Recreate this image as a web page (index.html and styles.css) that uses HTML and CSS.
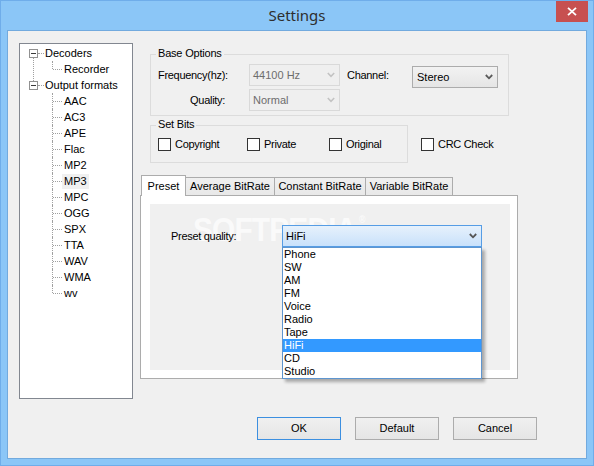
FILE: index.html
```html
<!DOCTYPE html>
<html>
<head>
<meta charset="utf-8">
<title>Settings</title>
<link rel="stylesheet" href="styles.css">
</head>
<body>
<div class="window">
  <div class="titlebar">
    <span class="title">Settings</span>
    <div class="close"><svg width="10" height="9" viewBox="0 0 10 9"><path d="M1 0.8 L9 8.2 M9 0.8 L1 8.2" stroke="#fff" stroke-width="1.8" fill="none"/></svg></div>
  </div>
  <div class="client">
    <div class="main">
      <div class="tree">
        <div class="node first">
          <div class="row top"><span class="exp"></span><span class="dots"></span><span class="lab">Decoders</span></div>
          <div class="row kid last"><span class="lab">Recorder</span></div>
        </div>
        <div class="node">
          <div class="row top"><span class="exp"></span><span class="dots"></span><span class="lab">Output formats</span></div>
          <div class="row kid"><span class="lab">AAC</span></div>
          <div class="row kid"><span class="lab">AC3</span></div>
          <div class="row kid"><span class="lab">APE</span></div>
          <div class="row kid"><span class="lab">Flac</span></div>
          <div class="row kid"><span class="lab">MP2</span></div>
          <div class="row kid"><span class="lab sel">MP3</span></div>
          <div class="row kid"><span class="lab">MPC</span></div>
          <div class="row kid"><span class="lab">OGG</span></div>
          <div class="row kid"><span class="lab">SPX</span></div>
          <div class="row kid"><span class="lab">TTA</span></div>
          <div class="row kid"><span class="lab">WAV</span></div>
          <div class="row kid"><span class="lab">WMA</span></div>
          <div class="row kid last"><span class="lab">wv</span></div>
        </div>
      </div>
      <div class="right">
        <div class="group base">
          <span class="legend">Base Options</span>
          <div class="frow">
            <span class="lbl w91">Frequency(hz):</span>
            <div class="combo dis w91c"><span class="ctext">44100 Hz</span><svg class="arrow" width="8" height="6" viewBox="0 0 8 6"><path d="M0.8 1 L4 4.3 L7.2 1" stroke="#c3c3c3" stroke-width="1.6" fill="none"/></svg></div>
            <span class="lbl chan">Channel:</span>
            <div class="combo norm stereo"><span class="ctext">Stereo</span><svg class="arrow" width="8" height="6" viewBox="0 0 8 6"><path d="M0.8 1 L4 4.3 L7.2 1" stroke="#5a5a5a" stroke-width="1.8" fill="none"/></svg></div>
          </div>
          <div class="frow second">
            <span class="lbl w91 ralign">Quality:</span>
            <div class="combo dis w91c"><span class="ctext">Normal</span><svg class="arrow" width="8" height="6" viewBox="0 0 8 6"><path d="M0.8 1 L4 4.3 L7.2 1" stroke="#c3c3c3" stroke-width="1.6" fill="none"/></svg></div>
          </div>
        </div>
        <div class="bitsrow">
          <div class="group bits">
            <span class="legend">Set Bits</span>
            <label class="chk w89"><span class="box"></span>Copyright</label>
            <label class="chk w82"><span class="box"></span>Private</label>
            <label class="chk"><span class="box"></span>Original</label>
          </div>
          <label class="chk crc"><span class="box"></span>CRC Check</label>
        </div>
        <div class="tabs">
          <div class="tab active t1">Preset</div>
          <div class="tab t2">Average BitRate</div>
          <div class="tab t3">Constant BitRate</div>
          <div class="tab t4">Variable BitRate</div>
        </div>
        <div class="panel">
          <div class="pinner">
            <div class="watermark">SOFTPEDIA<sup>®</sup></div>
            <span class="lbl plabel">Preset quality:</span>
            <div class="combo focus">
              <span class="ctext">HiFi</span>
              <svg class="arrow" width="8" height="6" viewBox="0 0 8 6"><path d="M0.8 1 L4 4.3 L7.2 1" stroke="#555" stroke-width="1.8" fill="none"/></svg>
              <div class="list">
                <div class="item">Phone</div>
                <div class="item">SW</div>
                <div class="item">AM</div>
                <div class="item">FM</div>
                <div class="item">Voice</div>
                <div class="item">Radio</div>
                <div class="item">Tape</div>
                <div class="item hl">HiFi</div>
                <div class="item">CD</div>
                <div class="item">Studio</div>
              </div>
            </div>
          </div>
        </div>
      </div>
    </div>
    <div class="buttons">
      <div class="btn def">OK</div>
      <div class="btn">Default</div>
      <div class="btn">Cancel</div>
    </div>
  </div>
</div>
</body>
</html>
```
FILE: styles.css
```css
* { box-sizing: border-box; }
html, body { margin: 0; padding: 0; }
body {
  width: 594px;
  height: 466px;
  overflow: hidden;
  font-family: "Liberation Sans", Arial, sans-serif;
  font-size: 11px;
  color: #000;
}
.window {
  width: 594px;
  height: 466px;
  background: #8bc6f7;
  box-shadow: inset 0 0 0 1px #6fadea;
}
.titlebar {
  height: 30px;
  position: relative;
  text-align: center;
}
.title {
  font-family: "Noto Sans", "Open Sans", sans-serif;
  font-size: 15px;
  color: #2e2e2e;
  line-height: 31px;
}
.close {
  position: absolute;
  top: 1px;
  right: 6px;
  width: 32px;
  height: 21px;
  background: #c75050;
  display: flex;
  align-items: center;
  justify-content: center;
}
.client {
  margin: 0 7px;
  height: 429px;
  background: #f0f0f0;
  border: 1px solid #72aade;
}
.main {
  display: flex;
  padding: 12px 0 0 11px;
}
/* tree */
.tree {
  width: 114px;
  height: 356px;
  border: 1px solid #828790;
  background: #fff;
  padding-top: 1px;
}
.node { position: relative; }
.node.first::before {
  content: "";
  position: absolute;
  left: 13px;
  top: 13px;
  bottom: -4px;
  border-left: 1px dotted #a0a0a0;
}
.row {
  height: 16px;
  line-height: 16px;
  white-space: nowrap;
}
.row.top {
  display: flex;
  align-items: center;
  padding-left: 9px;
}
.exp {
  width: 9px;
  height: 9px;
  border: 1px solid #919191;
  background: #fff;
  position: relative;
  flex: none;
}
.exp::after {
  content: "";
  position: absolute;
  left: 1px;
  top: 3px;
  width: 5px;
  height: 1px;
  background: #3a3a3a;
}
.dots {
  width: 6px;
  border-top: 1px dotted #a0a0a0;
  margin-right: 1px;
  flex: none;
}
.row.kid {
  position: relative;
  padding-left: 44px;
}
.row.kid::before {
  content: "";
  position: absolute;
  left: 32px;
  top: 0;
  bottom: 0;
  border-left: 1px dotted #a0a0a0;
}
.row.kid.last::before { bottom: 8px; }
.row.kid::after {
  content: "";
  position: absolute;
  left: 33px;
  top: 8px;
  width: 9px;
  border-top: 1px dotted #a0a0a0;
}
.lab { display: inline-block; }
.sel {
  background: #f0f0f0;
  margin-left: -2px;
  padding: 0 2px;
  line-height: 15px;
}
/* right column */
.right {
  margin-left: 7px;
  padding-top: 11px;
  display: flex;
  flex-direction: column;
  align-items: flex-start;
}
.group {
  position: relative;
  border: 1px solid #dcdcdc;
  margin-left: 10px;
}
.legend {
  position: absolute;
  top: -9px;
  left: 5px;
  padding: 0 2px;
  background: #f0f0f0;
  line-height: 14px;
  letter-spacing: -0.2px;
}
.base {
  width: 359px;
  height: 62px;
  padding: 9px 0 0 7px;
}
.frow {
  display: flex;
  align-items: flex-start;
  height: 22px;
}
.frow.second { margin-top: 3px; }
.lbl { line-height: 22px; white-space: nowrap; letter-spacing: -0.3px; }
.w91 { width: 91px; flex: none; }
.ralign { text-align: right; padding-right: 24px; }
.chan { margin-left: 7px; width: 65px; }
.combo {
  height: 22px;
  border: 1px solid #acacac;
  display: flex;
  align-items: center;
  padding-left: 3px;
  position: relative;
  flex: none;
}
.ctext { line-height: 20px; }
.arrow { margin-left: auto; margin-right: 4px; display: block; }
.combo.dis {
  border-color: #d9d9d9;
  background: #efefef;
  color: #6d6d6d;
}
.w91c { width: 91px; }
.combo.norm {
  background: linear-gradient(#f2f2f2, #e5e5e5);
}
.stereo { width: 86px; margin-top: 2px; padding-left: 4px; }
.bitsrow {
  display: flex;
  align-items: center;
  margin-top: 9px;
}
.bits {
  width: 258px;
  height: 38px;
  padding: 12px 0 0 7px;
  display: flex;
  align-items: flex-start;
}
.chk {
  display: flex;
  align-items: center;
  height: 13px;
  line-height: 13px;
  white-space: nowrap;
  letter-spacing: -0.3px;
}
.w89 { width: 89px; }
.w82 { width: 82px; }
.box {
  width: 13px;
  height: 13px;
  border: 1px solid #333;
  background: #fff;
  margin-right: 4px;
  flex: none;
}
.crc { margin-left: 13px; }
/* tabs */
.tabs {
  display: flex;
  align-items: flex-end;
  margin-top: 12px;
  margin-left: 1px;
  margin-bottom: -1px;
  height: 21px;
  position: relative;
  z-index: 1;
}
.tab {
  height: 19px;
  border: 1px solid #acacac;
  background: linear-gradient(#f0f0f0, #e8e8e8);
  text-align: center;
  line-height: 17px;
  white-space: nowrap;
}
.tab.active {
  height: 21px;
  border-bottom: none;
  background: #fff;
  line-height: 20px;
}
.t1 { width: 45px; }
.t2 { width: 89px; border-left: none; }
.t3 { width: 91px; border-left: none; }
.t4 { width: 87px; border-left: none; }
.panel {
  width: 378px;
  height: 184px;
  border: 1px solid #acacac;
  background: #fff;
  padding: 8px 7px 8px 9px;
}
.pinner {
  position: relative;
  height: 166px;
  background: #f0f0f0;
  padding: 21px 0 0 21px;
  display: flex;
  align-items: flex-start;
}
.plabel { width: 111px; flex: none; position: relative; z-index: 1; }
.watermark {
  position: absolute;
  left: 43px;
  top: 10px;
  font-family: "Liberation Sans", Arial, sans-serif;
  font-weight: bold;
  font-size: 34px;
  letter-spacing: -1px;
  color: rgba(255, 255, 255, 0.7);
  transform: scaleX(0.88);
  transform-origin: left top;
  white-space: nowrap;
  line-height: 30px;
  height: 30px;
  z-index: 0;
}
.watermark sup { font-size: 10px; vertical-align: top; line-height: 12px; margin-left: 3px; }
.combo.focus {
  width: 200px;
  border-color: #569de5;
  background: linear-gradient(#e6f1fc, #c8e1fb);
  z-index: 2;
}
.list {
  position: absolute;
  left: -1px;
  top: calc(100% + 1px);
  width: 200px;
  border: 1px solid #5e95cf;
  background: #fff;
  box-shadow: 3px 3px 3px rgba(0, 0, 0, 0.3);
  z-index: 5;
}
.item {
  height: 13px;
  line-height: 13px;
  padding-left: 1px;
}
.item.hl { background: #3399ff; color: #fff; }
/* buttons */
.buttons {
  display: flex;
  gap: 14px;
  margin-top: 18px;
  padding-left: 249px;
}
.btn {
  width: 84px;
  height: 23px;
  border: 1px solid #acacac;
  background: linear-gradient(#f0f0f0, #e5e5e5);
  text-align: center;
  line-height: 21px;
}
.btn.def { border-color: #3c8fe0; }
```
